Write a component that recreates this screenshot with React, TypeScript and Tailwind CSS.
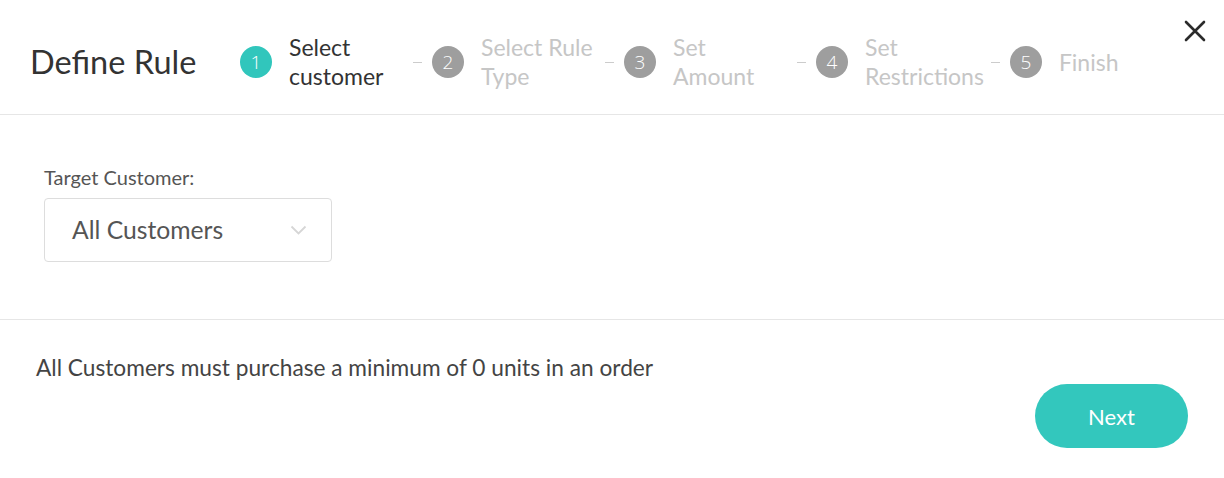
import React from "react";

const steps = [
  { n: 1, lines: ["Select", "customer"], active: true },
  { n: 2, lines: ["Select Rule", "Type"], active: false },
  { n: 3, lines: ["Set", "Amount"], active: false },
  { n: 4, lines: ["Set", "Restrictions"], active: false },
  { n: 5, lines: ["Finish"], active: false },
];

export default function App() {
  return (
    <div className="w-[1224px] h-[478px] bg-white font-['Lato','Noto_Sans',sans-serif] overflow-hidden">
      <header className="relative h-[115px] border-b border-[#e6e6e6] flex items-center pt-[10px] pl-[30px]">
        <h1 className="w-[210px] text-[32.5px] leading-[38px] text-[#333333] font-normal">Define Rule</h1>
        <div className="flex items-center">
          {steps.map((s, i) => (
            <div key={s.n} className="flex items-center">
              <div
                className={
                  s.active
                    ? "w-8 h-8 rounded-full bg-[#31c6bc] flex items-center justify-center text-white text-[19px] leading-none font-['Open_Sans',sans-serif] font-light"
                    : "w-8 h-8 rounded-full bg-[#9e9e9e] flex items-center justify-center text-white text-[19px] leading-none font-['Open_Sans',sans-serif] font-light"
                }
              >
                {s.n}
              </div>
              <div
                className={
                  s.active
                    ? "ml-[17px] min-w-[117px] text-[23px] leading-[29px] text-[#333333]"
                    : "ml-[17px] min-w-[117px] text-[23px] leading-[29px] text-[#c6c6c6]"
                }
              >
                {s.lines.map((l) => (
                  <div key={l} className="whitespace-nowrap">{l}</div>
                ))}
              </div>
              {i < steps.length - 1 && <div className="ml-[7px] mr-[10px] w-[9px] h-px bg-[#cccccc]" />}
            </div>
          ))}
        </div>
        <button className="absolute right-[18px] top-[20px] w-[22px] h-[22px]" aria-label="Close">
          <svg width="22" height="22" viewBox="0 0 22 22" fill="none">
            <path d="M2 2 L20 20 M20 2 L2 20" stroke="#2b2b2b" strokeWidth="2.6" strokeLinecap="round" />
          </svg>
        </button>
      </header>

      <section className="h-[205px] border-b border-[#e6e6e6] pl-[44px] pt-[50px]">
        <label className="block text-[20px] leading-[24px] text-[#555555]">Target Customer:</label>
        <div className="mt-[9px] w-[288px] h-[64px] border border-[#dddddd] rounded-[4px] flex items-center justify-between pl-[27px] pr-[24px]">
          <span className="text-[24.7px] leading-[30px] text-[#555555]">All Customers</span>
          <svg width="17" height="10" viewBox="0 0 17 10" fill="none">
            <path d="M1.5 1.5 L8.5 8.5 L15.5 1.5" stroke="#d6d6d6" strokeWidth="1.8" />
          </svg>
        </div>
      </section>

      <footer className="px-[36px] pt-[34px]">
        <p className="text-[22.7px] leading-[28px] text-[#444444]">
          All Customers must purchase a minimum of 0 units in an order
        </p>
        <div className="flex justify-end mt-[2px]">
          <button className="w-[153px] h-[64px] rounded-full bg-[#33c7bd] text-white text-[22px]">Next</button>
        </div>
      </footer>
    </div>
  );
}
